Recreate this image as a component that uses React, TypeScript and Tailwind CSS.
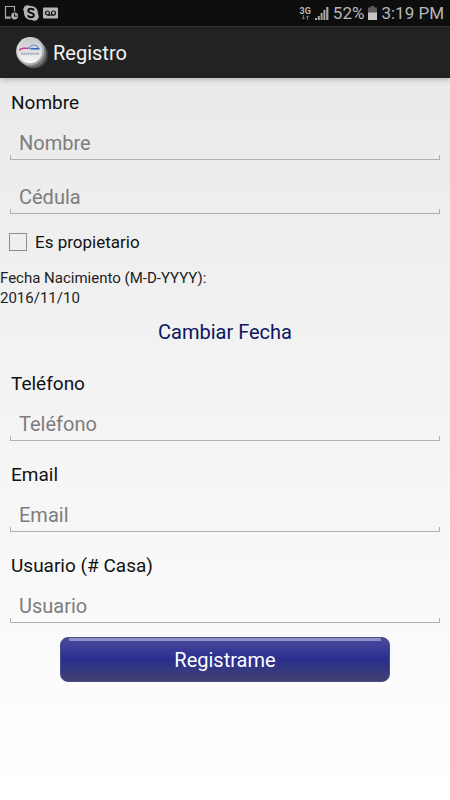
import { useState } from "react";

function StatusBar() {
  return (
    <div className="flex h-[26px] items-center justify-between bg-[#0e0e0e] pr-1.5 pl-1">
      <div className="flex items-center gap-1">
        <svg width="15" height="16" viewBox="0 0 15 16" fill="none">
          <path d="M10.5 6.5V1.5H1.5V13H6.5" stroke="#a8a8a8" strokeWidth="1.2" />
          <path d="M1 11.5H6.5V13.6H1Z" fill="#a8a8a8" />
          <circle cx="10.6" cy="11" r="3.4" fill="#b0b0b0" />
          <path d="M10.5 8.6V11.2H13" stroke="#0e0e0e" />
        </svg>
        <svg width="16" height="16" viewBox="0 0 16 16">
          <circle cx="8" cy="8" r="7" fill="#b5b5b5" />
          <circle cx="4.6" cy="4.6" r="4.3" fill="#b5b5b5" />
          <circle cx="11.4" cy="11.4" r="4.3" fill="#b5b5b5" />
          <path
            d="M11 5.4C10.4 4 9.4 3.7 8 3.7C6.2 3.7 5.2 4.5 5.2 5.7C5.2 8.4 10.9 7.2 10.9 10.1C10.9 11.5 9.7 12.3 8 12.3C6.3 12.3 5.3 11.6 4.9 10.3"
            fill="none"
            stroke="#0e0e0e"
            strokeWidth="1.9"
          />
        </svg>
        <svg width="15" height="12" viewBox="0 0 15 12" fill="none">
          <rect width="15" height="11" y="0.5" rx="1" fill="#b5b5b5" />
          <circle cx="4.5" cy="6" r="2" stroke="#0e0e0e" strokeWidth="1.2" />
          <circle cx="10.5" cy="6" r="2" stroke="#0e0e0e" strokeWidth="1.2" />
          <path d="M4.5 8.1H10.5" stroke="#0e0e0e" strokeWidth="1.2" />
        </svg>
      </div>
      <div className="flex items-center gap-1 text-[17px] leading-5 text-[#b8b8b8]">
        <div className="flex flex-col items-center">
          <span className="text-[9px] leading-2 font-bold">3G</span>
          <svg width="9" height="5" viewBox="0 0 9 5" fill="none" stroke="#777">
            <path d="M2.5 0V4M1 2.7L2.5 4.2L4 2.7M6.5 5V1M5 2.3L6.5 0.8L8 2.3" />
          </svg>
        </div>
        <svg width="14" height="14" viewBox="0 0 14 14" fill="#a8a8a8">
          <path d="M0 12H2V14H0ZM2.8 10H4.8V14H2.8ZM5.6 7H7.6V14H5.6ZM8.4 4H10.4V14H8.4ZM11.2 1H13.4V14H11.2Z" />
        </svg>
        <span>52%</span>
        <svg width="9" height="14" viewBox="0 0 9 14">
          <path d="M2.5 0H6.5V1.5H9V7H0V1.5H2.5Z" fill="#5a5a5a" />
          <path d="M0 6.5H9V14H0Z" fill="#c4c4c4" />
        </svg>
        <span>3:19 PM</span>
      </div>
    </div>
  );
}

function Logo() {
  return (
    <svg width="33" height="34" viewBox="0 0 33 34">
      <defs>
        <linearGradient id="rim" x1="0" y1="0" x2="1" y2="1">
          <stop offset="0" stopColor="#e4e4e4" />
          <stop offset="1" stopColor="#999" />
        </linearGradient>
        <linearGradient id="face" x1="0" y1="0" x2="0" y2="1">
          <stop offset="0" stopColor="#c9c9cb" />
          <stop offset="1" stopColor="#f7f7f8" />
        </linearGradient>
      </defs>
      <circle cx="18.5" cy="19" r="13.8" fill="#3b3b3b" />
      <circle cx="16.5" cy="17.5" r="14" fill="#707070" />
      <circle cx="14.3" cy="15.3" r="14.2" fill="url(#rim)" />
      <circle cx="14" cy="15" r="12.2" fill="url(#face)" />
      <path d="M3.5 14.5C4.5 12 7 12.3 9 12.3H14" fill="none" stroke="#c33c8e" strokeWidth="1.6" />
      <path d="M12.5 12.8C14.5 9.5 17.5 8.6 20 9.5C21.5 10 21.5 11.5 23 12" fill="none" stroke="#7d9bd8" strokeWidth="1.4" />
      <path d="M14.5 12.8H23.5" stroke="#3465c0" strokeWidth="1.6" />
      <path d="M5 17.8H23" stroke="#9da3c4" strokeWidth="2" strokeDasharray="1.6 0.7" />
    </svg>
  );
}

type FieldProps = {
  id: string;
  placeholder: string;
  label?: string;
  type?: string;
};

function Field({ id, placeholder, label, type = "text" }: FieldProps) {
  return (
    <div className="flex flex-col px-2.5">
      {label && (
        <label htmlFor={id} className="mb-4 px-px text-[19px] leading-6 text-[#111]">
          {label}
        </label>
      )}
      <input
        id={id}
        type={type}
        placeholder={placeholder}
        aria-label={label ?? placeholder}
        className="h-6 bg-transparent px-[9px] text-xl leading-6 text-[#111] outline-none placeholder:text-[#7d7d7d]"
      />
      {/* holo style underline with the small end ticks */}
      <div className="h-[5px] border-x border-b border-[#b0b0b0]" />
    </div>
  );
}

export default function App() {
  const [owner, setOwner] = useState(false);

  return (
    <div className="flex min-h-screen flex-col bg-linear-to-b from-[#e8e8e8] to-white font-[Roboto,sans-serif]">
      <StatusBar />
      <header className="flex h-[52px] items-center gap-1 border-t border-[#333] bg-[#222] px-4 shadow-[0_1px_6px_rgba(0,0,0,0.3)]">
        <Logo />
        <h1 className="text-xl leading-6 text-[#f3f3f3]">Registro</h1>
      </header>

      <form className="flex flex-col pt-[13px]" onSubmit={(e) => e.preventDefault()}>
        <Field id="nombre" label="Nombre" placeholder="Nombre" />
        <div className="mt-[25px]">
          <Field id="cedula" placeholder="Cédula" />
        </div>

        <label className="mt-4 flex items-center gap-2 px-[9px] text-[17px] leading-6 text-[#111]">
          <input
            type="checkbox"
            checked={owner}
            onChange={(e) => setOwner(e.target.checked)}
            className="size-[18px] appearance-none border border-[#8c8c8c] checked:bg-[#2c2f8f]"
          />
          Es propietario
        </label>

        <div className="mt-3.5 text-[15px] leading-5 text-[#222]">
          <p>Fecha Nacimiento (M-D-YYYY):</p>
          <p>2016/11/10</p>
        </div>

        <button type="button" className="mt-3 self-center text-xl leading-6 text-[#0b1560]">
          Cambiar Fecha
        </button>

        <div className="mt-7 flex flex-col gap-[22px]">
          <Field id="telefono" label="Teléfono" placeholder="Teléfono" type="tel" />
          <Field id="email" label="Email" placeholder="Email" type="email" />
          <Field id="usuario" label="Usuario (# Casa)" placeholder="Usuario" />
        </div>

        <div className="mt-3.5 flex flex-col px-[60px]">
          <button
            type="submit"
            className="flex h-[45px] flex-col rounded-lg border border-[#4a4a8c] bg-linear-to-b from-[#4a4a9c] via-[#2b2e90] to-[#42406f] px-2 text-xl text-white"
          >
            <span className="h-[3px] w-full bg-[#8f8fc6]" />
            <span className="w-full flex-1 leading-[39px]">Registrame</span>
          </button>
        </div>
      </form>
    </div>
  );
}
